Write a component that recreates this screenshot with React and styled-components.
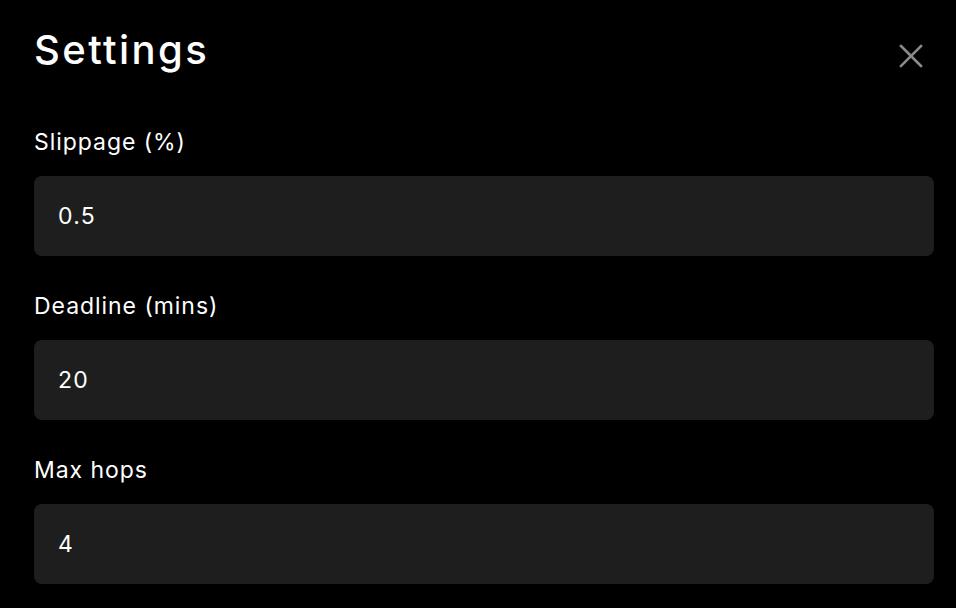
import React from 'react'
import styled, { createGlobalStyle } from 'styled-components'

const Global = createGlobalStyle`
  html, body {
    margin: 0;
    background: #000;
  }
  body {
    font-family: Inter, "Noto Sans", sans-serif;
    color: #fff;
  }
`

const Panel = styled.div`
  width: 956px;
  height: 608px;
  box-sizing: border-box;
  padding: 22px 22px 0 34px;
  background: #000;
  overflow: hidden;
`

const Header = styled.div`
  display: flex;
  justify-content: space-between;
  align-items: center;
  height: 56px;
  margin-bottom: 50px;
`

const Title = styled.h2`
  margin: 0;
  font-size: 40px;
  font-weight: 500;
  letter-spacing: 2.4px;
  line-height: 56px;
`

const Close = styled.button`
  width: 36px;
  height: 36px;
  padding: 0;
  margin-right: 5px;
  margin-top: 12px;
  border: none;
  background: transparent;
  display: flex;
  align-items: center;
  justify-content: center;
  cursor: pointer;
  svg {
    width: 24px;
    height: 24px;
  }
`

const Form = styled.div`
  display: flex;
  flex-direction: column;
  gap: 36px;
`

const Field = styled.label`
  display: flex;
  flex-direction: column;
  gap: 20px;
`

const Label = styled.span`
  font-size: 23px;
  line-height: 28px;
  font-weight: 400;
  letter-spacing: 0.95px;
  color: #fff;
`

const Input = styled.input`
  box-sizing: border-box;
  width: 900px;
  height: 80px;
  padding: 0 24px;
  border: none;
  border-radius: 8px;
  background: #1e1e1e;
  color: #fff;
  font-family: inherit;
  font-size: 23px;
  letter-spacing: 1.2px;
  outline: none;
`

const fields = [
  { label: 'Slippage (%)', value: '0.5' },
  { label: 'Deadline (mins)', value: '20' },
  { label: 'Max hops', value: '4' },
]

export default function App() {
  return (
    <>
      <Global />
      <Panel>
        <Header>
          <Title>Settings</Title>
          <Close aria-label="Close">
            <svg viewBox="0 0 24 24" fill="none" stroke="#8a8a8a" strokeWidth="2.6" strokeLinecap="square">
              <path d="M2 2 L22 22 M22 2 L2 22" />
            </svg>
          </Close>
        </Header>
        <Form>
          {fields.map((f) => (
            <Field key={f.label}>
              <Label>{f.label}</Label>
              <Input defaultValue={f.value} />
            </Field>
          ))}
        </Form>
      </Panel>
    </>
  )
}
